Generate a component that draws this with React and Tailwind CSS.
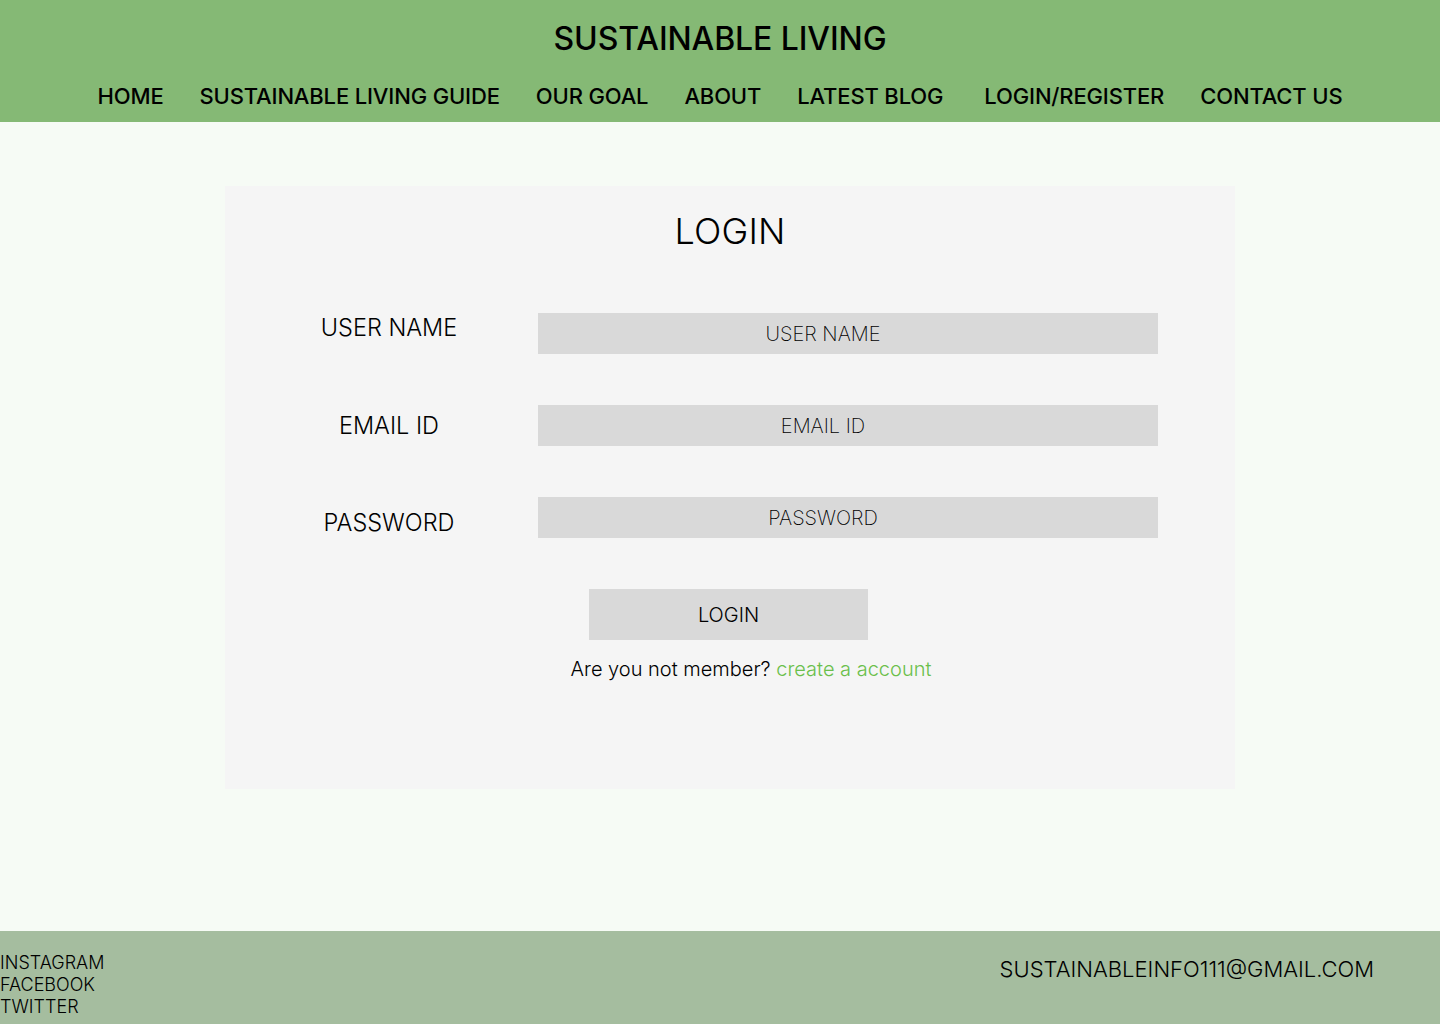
import React from 'react';

const navLinks = [
  'HOME',
  'SUSTAINABLE LIVING GUIDE',
  'OUR GOAL',
  'ABOUT',
  'LATEST BLOG',
  'LOGIN/REGISTER',
  'CONTACT US',
];

const fields = [
  { label: 'USER NAME', placeholder: 'USER NAME', type: 'text' },
  { label: 'EMAIL ID', placeholder: 'EMAIL ID', type: 'email' },
  { label: 'PASSWORD', placeholder: 'PASSWORD', type: 'password' },
];

export default function App() {
  return (
    <div className="min-h-screen flex flex-col bg-[#f6fbf5] font-['Inter',sans-serif] text-black">
      {/* Header */}
      <header className="h-[122px] bg-[#85b975] flex flex-col items-center">
        <h1 className="mt-[19px] text-[32px] leading-[40px] font-medium tracking-[-0.1px]">SUSTAINABLE LIVING</h1>
        <nav className="mt-[22px] flex items-center gap-[36px] text-[22px] leading-[30px] font-medium tracking-[-0.15px]">
          {navLinks.map((link) => (
            <a key={link} href="#" className={link === 'LOGIN/REGISTER' ? 'whitespace-nowrap ml-[5px]' : 'whitespace-nowrap'}>
              {link}
            </a>
          ))}
        </nav>
      </header>

      {/* Main */}
      <main className="flex-1 flex justify-center pt-[64px]">
        <div className="w-[1010px] h-[603px] bg-[#f5f5f5] ml-[20px] flex flex-col items-center">
          <h2 className="mt-[23px] text-[36px] leading-[44px] font-light tracking-[0.2px]">LOGIN</h2>

          <form className="mt-[60px] w-full flex" onSubmit={(e) => e.preventDefault()}>
            {/* labels */}
            <div className="w-[313px] pl-[15px] flex flex-col gap-[67.5px] pt-[-0px]">
              {fields.map((f) => (
                <label key={f.label} className="text-center text-[23.5px] leading-[30px] font-light">
                  {f.label}
                </label>
              ))}
            </div>
            {/* inputs */}
            <div className="flex flex-col gap-[51px]">
              {fields.map((f) => (
                <input
                  key={f.label}
                  type="text"
                  placeholder={f.placeholder}
                  className="w-[620px] h-[41px] bg-[#d9d9d9] text-center pr-[50px] text-[20px] font-extralight placeholder:text-black outline-none"
                />
              ))}
            </div>
          </form>

          <button className="mt-[51px] w-[279px] h-[51px] bg-[#d9d9d9] text-[20px] font-light ml-[-3px]">LOGIN</button>
          <p className="mt-[14px] text-[20px] font-light ml-[42px]">
            Are you not member? <a href="#" className="text-[#6abf4b]">create a account</a>
          </p>
        </div>
      </main>

      {/* Footer */}
      <footer className="h-[93px] bg-[#a5bd9f] flex justify-between">
        <div className="pt-[21px] flex flex-col text-[18px] leading-[22px] font-light">
          <a href="#">INSTAGRAM</a>
          <a href="#">FACEBOOK</a>
          <a href="#">TWITTER</a>
        </div>
        <div className="pt-[22px] pr-[66px] text-[22px] font-light">SUSTAINABLEINFO111@GMAIL.COM</div>
      </footer>
    </div>
  );
}
